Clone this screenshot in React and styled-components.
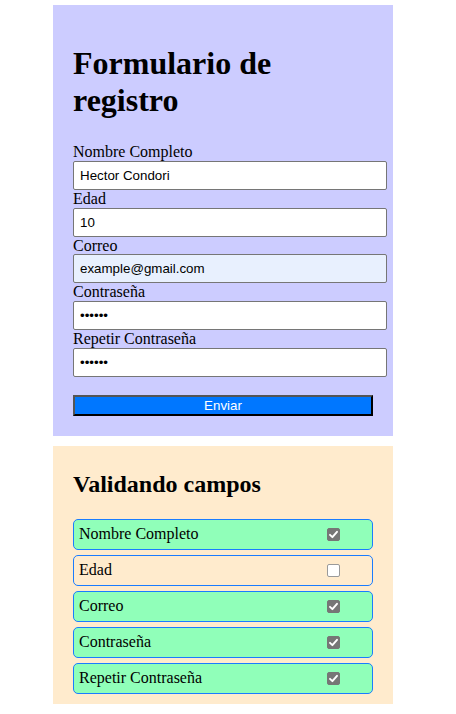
import React from "react";
import styled, { createGlobalStyle } from "styled-components";

const GlobalStyle = createGlobalStyle`
  body {
    margin: 0;
    background: #ffffff;
    font-family: "Liberation Serif", "Times New Roman", serif;
    font-size: 16px;
    color: #000;
  }
`;

const Page = styled.div`
  display: flex;
  flex-direction: column;
  gap: 10px;
  padding: 5px 0 11px 53px;
`;

const Panel = styled.section`
  width: 300px;
  padding: ${p => p.$pad};
  background: ${p => p.$bg};
`;

const Title = styled.h1`
  font-size: 32px;
  font-weight: bold;
  margin: 21px 0 24px;
  line-height: 37px;
`;

const SubTitle = styled.h2`
  font-size: 24px;
  font-weight: bold;
  margin: 20px 0;
  line-height: 27.6px;
`;

const Form = styled.form`
  display: flex;
  flex-direction: column;
`;

const Label = styled.label`
  display: block;
  height: 17.8px;
  line-height: 17.8px;
`;

const Input = styled.input`
  display: block;
  box-sizing: content-box;
  width: 100%;
  height: 15px;
  margin: 0;
  padding: 6px;
  border: 1px solid #767676;
  border-radius: 2px;
  background: ${p => (p.$autofill ? "#e8f0fe" : "#ffffff")};
  font-family: "Liberation Sans", Arial, sans-serif;
  font-size: 13.33px;
  color: #000;
`;

const Submit = styled.button`
  margin-top: 18px;
  width: 300px;
  height: 21px;
  padding: 0 6px;
  border: 2px solid;
  border-color: #555 #000 #000 #555;
  background: #0077ff;
  color: #ffffff;
  font-family: "Liberation Sans", Arial, sans-serif;
  font-size: 13.33px;
  line-height: 15px;
`;

const Checks = styled.div`
  display: flex;
  flex-direction: column;
  gap: 5px;
  margin-bottom: 5px;
`;

const CheckRow = styled.div`
  display: flex;
  align-items: center;
  justify-content: space-between;
  height: 19px;
  padding: 5px;
  border: 1px solid #1a7cff;
  border-radius: 5px;
  background: ${p => (p.$ok ? "#90ffb9" : "transparent")};
`;

const Box = styled.span`
  box-sizing: border-box;
  display: inline-flex;
  align-items: center;
  justify-content: center;
  width: 13px;
  height: 13px;
  margin-right: 27px;
  border-radius: 2px;
  border: 1px solid ${p => (p.$checked ? "#767676" : "#9a9a9a")};
  background: ${p => (p.$checked ? "#767676" : "#ffffff")};
`;

const CheckBox = ({ checked }) => (
  <Box $checked={checked} role="checkbox" aria-checked={checked} aria-disabled="true">
    {checked && (
      <svg width="11" height="11" viewBox="0 0 11 11">
        <path
          d="M2 5.8 L4.4 8.2 L9 2.8"
          fill="none"
          stroke="#ffffff"
          strokeWidth="1.9"
          strokeLinecap="round"
          strokeLinejoin="round"
        />
      </svg>
    )}
  </Box>
);

const fields = [
  { label: "Nombre Completo", type: "text", value: "Hector Condori" },
  { label: "Edad", type: "text", value: "10" },
  { label: "Correo", type: "email", value: "example@gmail.com", autofill: true },
  { label: "Contraseña", type: "password", value: "123456" },
  { label: "Repetir Contraseña", type: "password", value: "123456" },
];

const checks = [
  { label: "Nombre Completo", ok: true },
  { label: "Edad", ok: false },
  { label: "Correo", ok: true },
  { label: "Contraseña", ok: true },
  { label: "Repetir Contraseña", ok: true },
];

export default function App() {
  return (
    <>
      <GlobalStyle />
      <Page>
        <Panel $bg="#ccccff" $pad="19px 20px 20px">
          <Title>Formulario de registro</Title>
          <Form onSubmit={e => e.preventDefault()}>
            {fields.map(f => (
              <React.Fragment key={f.label}>
                <Label>{f.label}</Label>
                <Input
                  type={f.type}
                  defaultValue={f.value}
                  $autofill={f.autofill}
                />
              </React.Fragment>
            ))}
            <Submit type="submit">Enviar</Submit>
          </Form>
        </Panel>
        <Panel $bg="#ffebcd" $pad="5px 20px">
          <SubTitle>Validando campos</SubTitle>
          <Checks>
            {checks.map(c => (
              <CheckRow key={c.label} $ok={c.ok}>
                <span>{c.label}</span>
                <CheckBox checked={c.ok} />
              </CheckRow>
            ))}
          </Checks>
        </Panel>
      </Page>
    </>
  );
}
